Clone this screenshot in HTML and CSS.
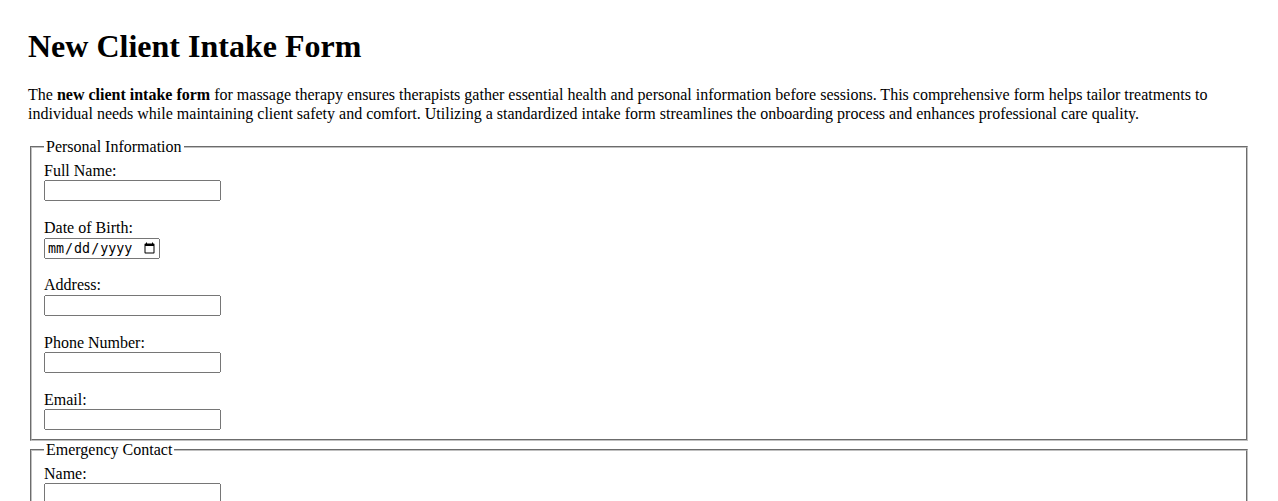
FILE: index.html
```html
<!DOCTYPE html>
<html lang="en">
<head>
<meta charset="utf-8">
<title>New Client Intake Form</title>
<link rel="stylesheet" href="styles.css">
</head>
<body>
<div class="page">
  <h1 class="title">New Client Intake Form</h1>
  <p class="intro">The <strong>new client intake form</strong> for massage therapy ensures therapists gather essential health and personal information before sessions. This comprehensive form helps tailor treatments to individual needs while maintaining client safety and comfort. Utilizing a standardized intake form streamlines the onboarding process and enhances professional care quality.</p>
  <form class="intake">
    <fieldset class="group">
      <legend class="group-title">Personal Information</legend>
      <div class="field">
        <label class="field-label" for="fullname">Full Name:</label>
        <input class="field-input" type="text" id="fullname">
      </div>
      <div class="field">
        <label class="field-label" for="dob">Date of Birth:</label>
        <input class="field-date" type="date" id="dob">
      </div>
      <div class="field">
        <label class="field-label" for="address">Address:</label>
        <input class="field-input" type="text" id="address">
      </div>
      <div class="field">
        <label class="field-label" for="phone">Phone Number:</label>
        <input class="field-input" type="tel" id="phone">
      </div>
      <div class="field">
        <label class="field-label" for="email">Email:</label>
        <input class="field-input" type="email" id="email">
      </div>
    </fieldset>
    <fieldset class="group">
      <legend class="group-title">Emergency Contact</legend>
      <div class="field">
        <label class="field-label" for="ecname">Name:</label>
        <input class="field-input" type="text" id="ecname">
      </div>
      <div class="field">
        <label class="field-label" for="ecphone">Phone Number:</label>
        <input class="field-input" type="tel" id="ecphone">
      </div>
    </fieldset>
  </form>
</div>
</body>
</html>
```
FILE: styles.css
```css
html, body {
  margin: 0;
  padding: 0;
  background: #ffffff;
}

body {
  font-family: "Liberation Serif", "Times New Roman", serif;
  font-size: 16px;
  line-height: 18.4px;
  color: #000000;
}

.page {
  padding: 28px;
}

.title {
  font-size: 32px;
  line-height: 37px;
  font-weight: bold;
  margin: 0 0 21.44px 0;
}

.intro {
  margin: 0 0 15px 0;
}

.intake {
  margin: 0;
}

.group {
  margin: 0 2px;
  padding: 5.4px 12px 9px 12px;
  border: 2px groove rgb(192, 192, 192);
}

.group-title {
  padding: 0 2px;
}

.field {
  display: flex;
  flex-direction: column;
  align-items: flex-start;
  margin-bottom: 17.8px;
}

.field:last-child {
  margin-bottom: 0;
}

.field-label {
  display: block;
}

.field-input {
  box-sizing: border-box;
  width: 177px;
  height: 21px;
  margin: 0;
}

.field-date {
  box-sizing: border-box;
  width: 116px;
  height: 21px;
  margin: 0;
}
```
